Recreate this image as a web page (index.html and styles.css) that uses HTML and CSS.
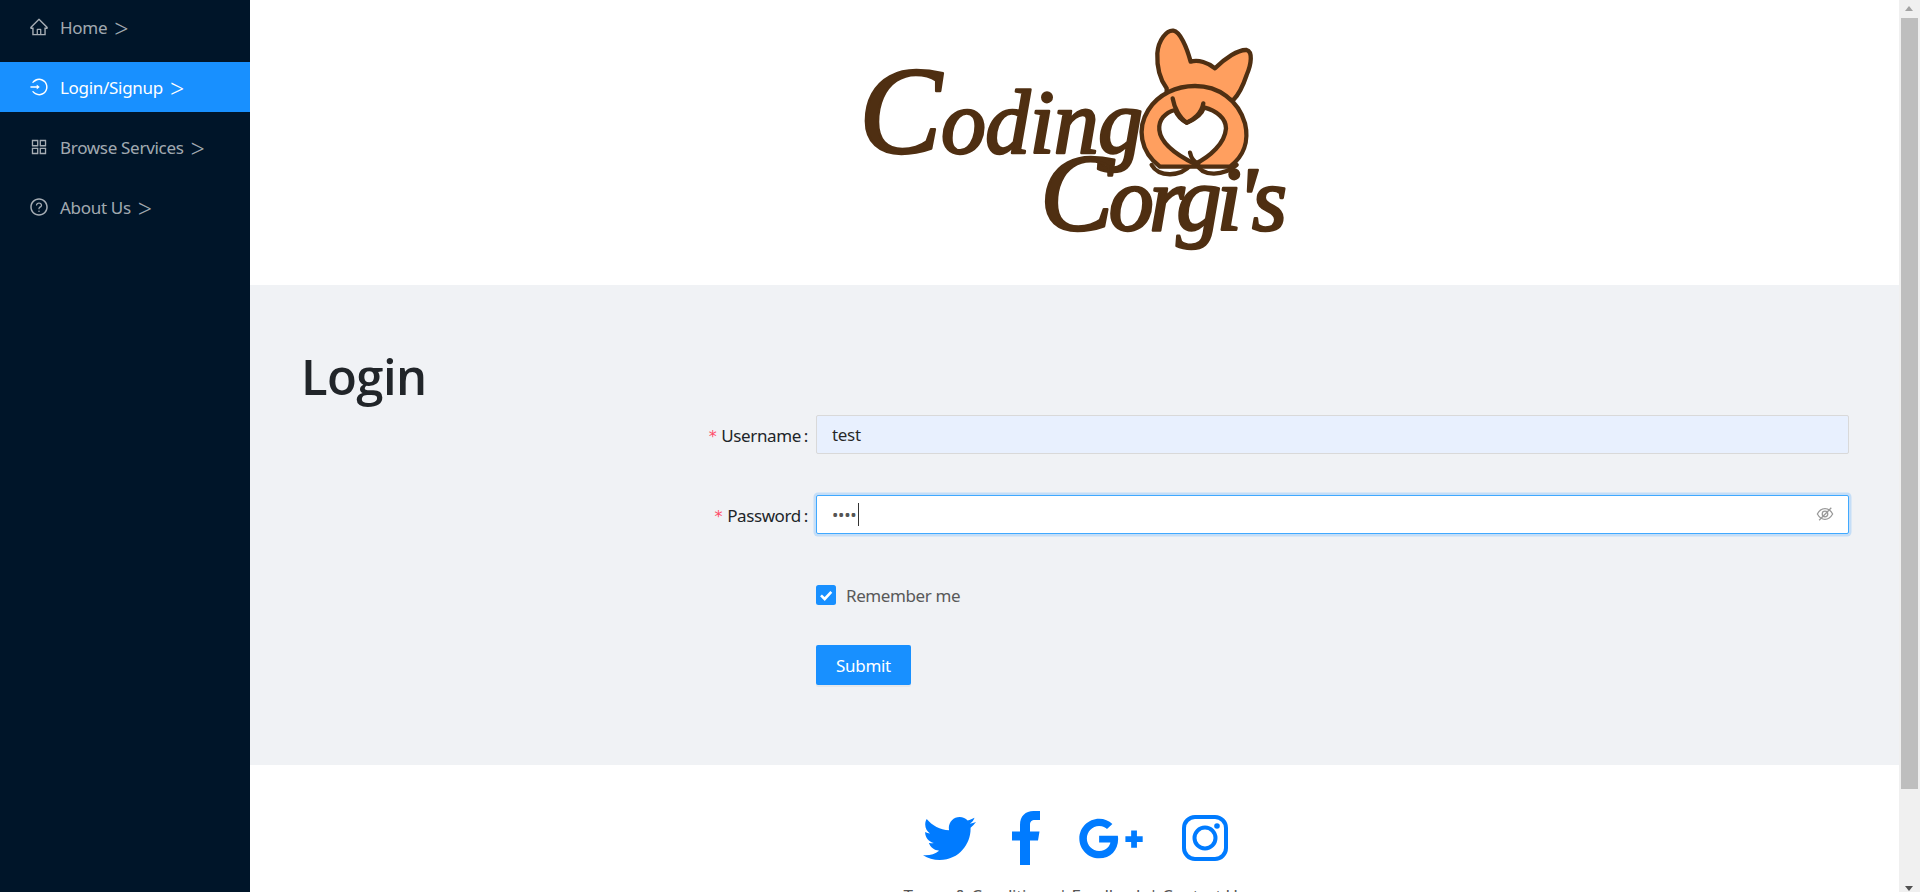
FILE: index.html
```html
<!DOCTYPE html>
<html lang="en">
<head>
<meta charset="utf-8">
<title>Coding Corgi's - Login</title>
<link rel="stylesheet" href="styles.css">
</head>
<body>
<div class="app">
  <aside class="sider">
    <nav class="menu">
      <a class="menu-item">
        <svg class="menu-icon" viewBox="0 0 1024 1024"><path d="M946.5 505L560.1 118.8l-25.9-25.9a31.5 31.5 0 0 0-44.4 0L77.5 505a63.9 63.9 0 0 0-18.8 46c.4 35.2 29.7 63.3 64.9 63.3h42.5V940h691.8V614.3h43.4c17.1 0 33.2-6.7 45.3-18.8a63.6 63.6 0 0 0 18.7-45.3c0-17-6.7-33.1-18.8-45.2zM568 868H456V664h112v204zm217.9-325.7V868H632V640c0-22.1-17.9-40-40-40H432c-22.1 0-40 17.9-40 40v228H238.1V542.3h-96l370-369.7 23.1 23.1L882 542.3h-96.1z"/></svg>
        <span>Home</span><span class="chev">&gt;</span>
      </a>
      <a class="menu-item active">
        <svg class="menu-icon" viewBox="0 0 1024 1024"><path d="M521.7 82c-152.5-.4-286.7 78.5-363.4 197.7-3.4 5.3.4 12.3 6.7 12.3h70.3c4.8 0 9.3-2.1 12.3-5.8 7-8.5 14.5-16.7 22.4-24.5 32.6-32.5 70.5-58.1 112.7-75.9 43.6-18.4 90-27.8 137.9-27.8 47.9 0 94.3 9.3 137.9 27.8 42.2 17.8 80.1 43.4 112.7 75.9 32.6 32.5 58.1 70.4 76 112.5C865.7 417.8 875 464.1 875 512c0 47.9-9.4 94.2-27.8 137.8-17.8 42.1-43.4 80-76 112.5s-70.5 58.1-112.7 75.9A352.8 352.8 0 0 1 520.6 866c-47.9 0-94.3-9.4-137.9-27.8A353.84 353.84 0 0 1 270 762.3c-7.9-7.9-15.3-16.1-22.4-24.5-3-3.7-7.6-5.8-12.3-5.8H165c-6.3 0-10.2 7-6.7 12.3C234.9 863.2 368.5 942 520.6 942c236.2 0 428-190.1 430.4-425.6C953.4 277.1 761.3 82.6 521.7 82zM395.02 624v-76h-314c-4.4 0-8-3.6-8-8v-56c0-4.4 3.6-8 8-8h314v-76c0-6.7 7.8-10.5 13-6.3l141.9 112a8 8 0 0 1 0 12.6l-141.9 112c-5.2 4.1-13 .4-13-6.3z"/></svg>
        <span>Login/Signup</span><span class="chev">&gt;</span>
      </a>
      <a class="menu-item">
        <svg class="menu-icon" viewBox="0 0 1024 1024"><path d="M464 144H160c-8.8 0-16 7.2-16 16v304c0 8.8 7.2 16 16 16h304c8.8 0 16-7.2 16-16V160c0-8.8-7.2-16-16-16zm-52 268H212V212h200v200zm452-268H560c-8.8 0-16 7.2-16 16v304c0 8.8 7.2 16 16 16h304c8.8 0 16-7.2 16-16V160c0-8.8-7.2-16-16-16zm-52 268H612V212h200v200zM464 544H160c-8.8 0-16 7.2-16 16v304c0 8.8 7.2 16 16 16h304c8.8 0 16-7.2 16-16V560c0-8.8-7.2-16-16-16zm-52 268H212V612h200v200zm452-268H560c-8.8 0-16 7.2-16 16v304c0 8.8 7.2 16 16 16h304c8.8 0 16-7.2 16-16V560c0-8.8-7.2-16-16-16zm-52 268H612V612h200v200z"/></svg>
        <span>Browse Services</span><span class="chev">&gt;</span>
      </a>
      <a class="menu-item">
        <svg class="menu-icon" viewBox="0 0 1024 1024"><path d="M512 64C264.6 64 64 264.6 64 512s200.6 448 448 448 448-200.6 448-448S759.4 64 512 64zm0 820c-205.4 0-372-166.6-372-372s166.6-372 372-372 372 166.6 372 372-166.6 372-372 372z"/><path d="M623.6 316.7C593.6 290.4 554 276 512 276s-81.6 14.5-111.6 40.7C369.2 344 352 380.7 352 420v7.6c0 4.4 3.6 8 8 8h48c4.4 0 8-3.6 8-8V420c0-44.1 43.1-80 96-80s96 35.9 96 80c0 31.1-22 59.6-56.1 72.7-21.2 8.1-39.2 22.3-52.1 40.9-13.1 19-19.9 41.8-19.9 64.9V620c0 4.4 3.6 8 8 8h48c4.4 0 8-3.6 8-8v-22.7a48.3 48.3 0 0 1 30.9-44.8c59-22.7 97.1-74.7 97.1-132.5.1-39.3-17.1-76-48.3-103.3zM472 732a40 40 0 1 0 80 0 40 40 0 1 0-80 0z"/></svg>
        <span>About Us</span><span class="chev">&gt;</span>
      </a>
    </nav>
  </aside>
  <main class="main">
    <header class="logo-band">
      <svg class="logo" viewBox="0 0 460 270" role="img" aria-label="Coding Corgi's logo">
        <text class="logo-word" x="9" y="143" textLength="284"><tspan class="logo-cap">C</tspan>oding</text>
        <text class="logo-word" x="190" y="220" textLength="247"><tspan class="logo-cap2">C</tspan>orgi's</text>
        <g transform="translate(280 10) scale(.3333)">
          <path class="corgi-fill" d="M110,205 C95,185 80,150 82,100 C85,60 110,30 130,32 C150,35 170,80 182,125 C205,118 235,128 255,145 C285,115 325,88 350,90 C368,95 365,130 350,165 C340,195 325,225 310,240 L110,240 Z"/>
          <path class="corgi-foot" d="M65,435 C85,470 150,475 185,432 M200,432 C215,470 280,470 320,435"/>
          <path class="corgi-fill" d="M90,440 C30,395 20,325 55,270 C85,222 140,198 195,198 C265,198 325,240 345,310 C358,365 340,410 300,440 L200,440 Z"/>
          <path class="corgi-white" d="M135,270 C105,278 85,300 88,330 C92,370 140,405 195,432 C240,410 285,370 288,325 C288,295 260,272 222,262 C215,285 190,300 170,308 C150,298 140,282 135,270 Z"/>
          <path class="corgi-line" d="M128,235 C133,265 150,295 170,308 C190,300 215,280 220,250"/>
          <path class="corgi-line" d="M180,398 C183,412 190,425 205,432"/>
        </g>
      </svg>
    </header>
    <section class="login-band">
      <h1 class="title">Login</h1>
      <form class="form">
        <div class="row">
          <label class="label" for="user"><span class="req">*</span>Username<span class="colon">:</span></label>
          <input class="input filled" id="user" type="text" value="test">
        </div>
        <div class="row">
          <label class="label" for="pass"><span class="req">*</span>Password<span class="colon">:</span></label>
          <div class="pass-wrap">
            <input class="input focused" id="pass" type="password" value="test">
            <i class="caret"></i>
            <svg class="eye" viewBox="0 0 20 20"><path d="M1.5 10C4 5.6 7 4 10 4s6 1.6 8.5 6C16 14.4 13 16 10 16S4 14.400 1.500 10z"/><circle cx="10" cy="10" r="3.100"/><path d="M3.500 17 17 3"/></svg>
          </div>
        </div>
        <div class="row remember">
          <span class="check"><svg viewBox="0 0 20 20"><path d="M5 10.300 8.700 14 15.300 6.800"/></svg></span>
          <span class="remember-text">Remember me</span>
        </div>
        <div class="row submit-row">
          <button class="submit" type="button">Submit</button>
        </div>
      </form>
    </section>
    <footer class="footer">
      <div class="socials">
        <svg class="soc tw" viewBox="0 0 512 512"><path d="M459.37 151.716c.325 4.548.325 9.097.325 13.645 0 138.72-105.583 298.558-298.558 298.558-59.452 0-114.68-17.219-161.137-47.106 8.447.974 16.568 1.299 25.34 1.299 49.055 0 94.213-16.568 130.274-44.832-46.132-.975-84.792-31.188-98.112-72.772 6.498.974 12.995 1.624 19.818 1.624 9.421 0 18.843-1.3 27.614-3.573-48.081-9.747-84.143-51.98-84.143-102.985v-1.299c13.969 7.797 30.214 12.67 47.431 13.319-28.264-18.843-46.781-51.005-46.781-87.391 0-19.492 5.197-37.36 14.294-52.954 51.655 63.675 129.3 105.258 216.365 109.807-1.624-7.797-2.599-15.918-2.599-24.04 0-57.828 46.782-104.934 104.934-104.934 30.213 0 57.502 12.67 76.67 33.137 23.715-4.548 46.456-13.32 66.599-25.34-7.798 24.366-24.366 44.833-46.132 57.827 21.117-2.273 41.584-8.122 60.426-16.243-14.292 20.791-32.161 39.308-52.628 54.253z"/></svg>
        <svg class="soc fb" viewBox="0 0 28 54"><path d="M8 54V29.500H0V20.500H8V14C8 5 13.500 0 21.500 0H28V9H23C19.500 9 18 10.800 18 14V20.500H27.500L26 29.500H18V54Z"/></svg>
        <svg class="soc gp" viewBox="0 0 640 512"><path d="M386.061 228.496c1.834 9.692 3.143 19.384 3.143 31.956C389.204 370.205 315.599 448 204.8 448c-106.084 0-192-85.915-192-192s85.916-192 192-192c51.864 0 95.083 18.859 128.611 50.292l-52.126 50.03c-14.145-13.621-39.028-29.599-76.485-29.599-65.484 0-118.92 54.221-118.92 121.277 0 67.056 53.436 121.277 118.92 121.277 75.961 0 104.513-54.745 108.965-82.773H204.8v-66.009h181.261zm185.406 6.437V179.2h-56.001v55.733h-55.733v56.001h55.733v55.733h56.001v-55.733H627.2v-56.001h-55.733z"/></svg>
        <svg class="soc ig" viewBox="0 0 46 46"><rect class="ig-line" x="2" y="2" width="42" height="42" rx="11"/><circle class="ig-line" cx="23" cy="23" r="10.500"/><circle cx="35" cy="11" r="2.800"/></svg>
      </div>
      <p class="legal">Terms &amp; Conditions | Feedback | Contact Us</p>
    </footer>
  </main>
</div>
<div class="scrollbar" aria-hidden="true">
  <i class="arrow up"></i>
  <i class="thumb"></i>
  <i class="arrow down"></i>
</div>
</body>
</html>
```
FILE: styles.css
```css
* { box-sizing: border-box; }
body {
  margin: 0;
  font-family: "Noto Sans", "Open Sans", sans-serif;
  font-size: 17px;
  letter-spacing: -.3px;
  color: #212529;
}
.app { display: flex; min-height: 992px; padding-right: 21px; }
.sider { flex: 0 0 250px; background: #001529; }
.menu { padding-top: 2px; display: flex; flex-direction: column; gap: 10px; }
.menu-item {
  height: 50px;
  display: flex;
  align-items: center;
  padding-left: 29px;
  color: rgba(255, 255, 255, .65);
  fill: rgba(255, 255, 255, .65);
}
.menu-item.active { background: #1890ff; color: #fff; fill: #fff; }
.menu-icon { width: 20px; height: 20px; margin-right: 11px; flex: none; }
.chev { margin-left: 7px; margin-top: 2px; font-size: 25px; font-weight: 300; line-height: 1; }
.main { flex: 1; min-width: 0; display: flex; flex-direction: column; background: #fff; }
.logo-band { height: 285px; display: flex; justify-content: center; align-items: flex-start; padding: 10px 0 0 11px; }
.logo { width: 460px; height: 270px; flex: none; overflow: visible; }
.corgi-fill { fill: #ff9f5f; stroke: #4f2f12; stroke-width: 13; stroke-linejoin: round; }
.corgi-white { fill: #fff; stroke: #4f2f12; stroke-width: 13; stroke-linejoin: round; }
.corgi-line { fill: none; stroke: #4f2f12; stroke-width: 13; stroke-linecap: round; }
.corgi-foot { fill: #fff; stroke: #4f2f12; stroke-width: 13; stroke-linecap: round; }
.logo-word {
  font-family: "Liberation Serif", serif;
  font-style: italic;
  font-size: 90px;
  letter-spacing: 0;
  fill: #4f2f12;
  stroke: #4f2f12;
  stroke-width: 2.5px;
  stroke-linejoin: round;
}
.logo-cap { font-size: 124px; }
.logo-cap2 { font-size: 110px; }
.login-band { height: 480px; background: #f0f2f5; padding: 61px 50px 0 51px; }
.title { margin: 0; font-family: "Open Sans", sans-serif; font-size: 49px; font-weight: 600; letter-spacing: -.6px; line-height: 60px; }
.form { margin-top: 9px; display: flex; flex-direction: column; }
.row { display: flex; align-items: center; height: 40px; margin-bottom: 40px; }
.label { flex: 0 0 515px; padding-right: 8px; text-align: right; letter-spacing: -.4px; }
.req { color: #ff4d6a; margin-right: 5px; font-family: "DejaVu Sans", sans-serif; font-size: 16px; line-height: 1; }
.colon { margin-left: 3px; }
.input {
  flex: 1;
  align-self: flex-start;
  width: 100%;
  height: 39px;
  border: 1px solid #d9d9d9;
  border-radius: 2px;
  padding: 0 15px;
  font: inherit;
  letter-spacing: inherit;
  color: rgba(0, 0, 0, .85);
  outline: none;
}
.filled { background: #e8f0fe; }
.focused { border-color: #40a9ff; color: #555; box-shadow: 0 0 0 2.5px rgba(24, 144, 255, .2); }
.pass-wrap { flex: 1; align-self: flex-start; position: relative; display: flex; }
.caret { position: absolute; left: 42px; top: 8px; width: 1px; height: 23px; background: #333; }
.eye { position: absolute; right: 15px; top: 10px; width: 18px; height: 18px; fill: none; stroke: #999; stroke-width: 1.4; }
.remember { margin-left: 515px; margin-top: 10px; height: 20px; margin-bottom: 40px; }
.check { width: 20px; height: 20px; border-radius: 2.5px; background: #1890ff; display: flex; }
.check svg { width: 20px; height: 20px; fill: none; stroke: #fff; stroke-width: 2.6; }
.remember-text { margin-left: 10px; color: #595959; letter-spacing: -.4px; }
.submit-row { margin-left: 515px; margin-bottom: 0; }
.submit { width: 95px; height: 40px; border: 0; border-radius: 2px; background: #1890ff; color: #fff; font: inherit; letter-spacing: inherit; box-shadow: 0 2px 0 rgba(0,0,0,.045); }
.footer { flex: 1; display: flex; flex-direction: column; align-items: center; padding-top: 46px; }
.socials { display: flex; align-items: center; gap: 38px; height: 54px; padding-left: 2px; }
.soc { fill: #007bff; flex: none; }
.tw { width: 53px; height: 53px; margin-right: -2px; }
.fb { width: 28px; height: 54px; }
.gp { width: 66px; height: 53px; }
.ig { width: 46px; height: 46px; }
.ig-line { fill: none; stroke: #007bff; stroke-width: 4; }
.legal { margin: 19px 0 0; color: #555; }
.scrollbar { position: fixed; top: 0; right: 0; bottom: 0; width: 21px; background: #f0f0f0; }
.thumb { position: absolute; left: 2px; top: 18px; width: 17px; height: 771px; background: #bebebe; }
.arrow { position: absolute; left: 6px; width: 0; height: 0; border-left: 4.5px solid transparent; border-right: 4.5px solid transparent; }
.arrow.up { top: 6px; border-bottom: 5px solid #a3a3a3; }
.arrow.down { bottom: 1px; border-top: 5px solid #505050; }
```
